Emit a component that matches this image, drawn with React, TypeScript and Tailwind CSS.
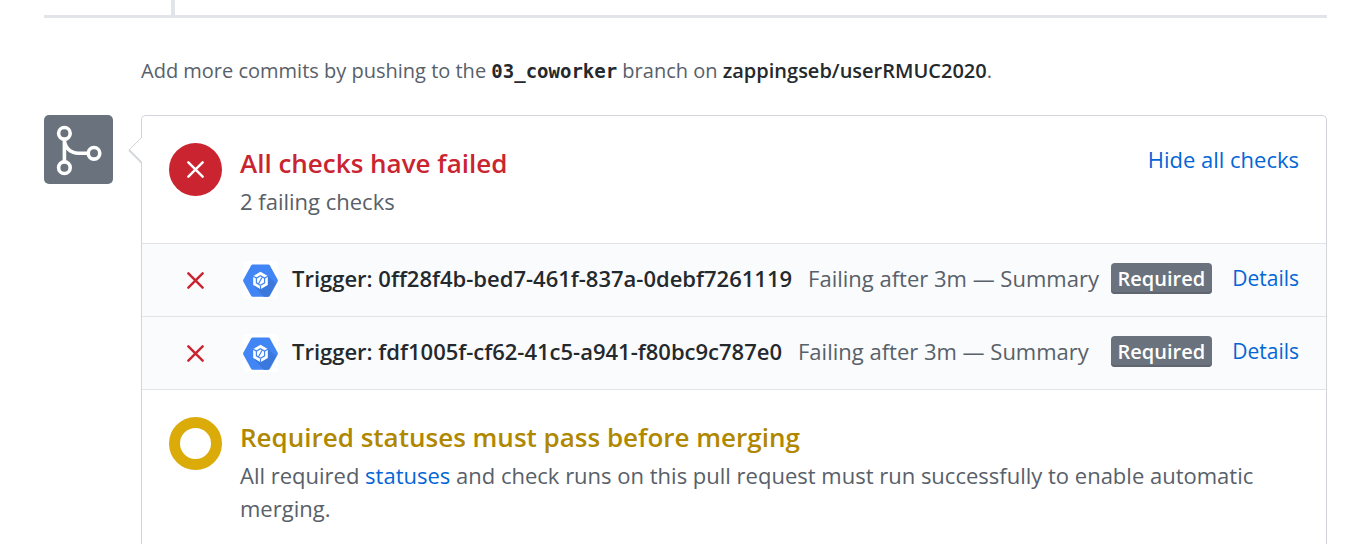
import React from "react";

const checks = [
  { id: "0ff28f4b-bed7-461f-837a-0debf7261119", status: "Failing after 3m — Summary" },
  { id: "fdf1005f-cf62-41c5-a941-f80bc9c787e0", status: "Failing after 3m — Summary" },
];

function MergeIcon() {
  return (
    <svg viewBox="0 0 69 69" className="h-[69px] w-[69px]" fill="none" stroke="#fff" strokeWidth="3.6" aria-hidden="true">
      <circle cx="20.4" cy="18.3" r="5.8" />
      <circle cx="20.4" cy="52.7" r="5.8" />
      <circle cx="50" cy="38.3" r="5.8" />
      <path d="M20.4 24v23M20.4 24c0 8.5 5.8 14.3 14.2 14.3H44" />
    </svg>
  );
}

function Cross({ className }: { className: string }) {
  return (
    <svg viewBox="0 0 16 16" className={className} fill="none" stroke="currentColor" strokeWidth="2.3" strokeLinecap="round" aria-hidden="true">
      <path d="M1.3 1.3l13.4 13.4M14.7 1.3L1.3 14.7" />
    </svg>
  );
}

function BuildLogo() {
  return (
    <svg viewBox="0 0 35 38" className="h-[38px] w-[35px] shrink-0 rounded-sm bg-white" aria-hidden="true">
      <path d="M9.6 3.5h15.8q1 0 1.5.9l7.7 14.1q.6 1.1 0 2.2l-7.7 14.1q-.5.9-1.5.9H9.600q-1 0-1.5-.9L.4 20.7q-.6-1.1 0-2.2L8.1 4.4q.5-.9 1.5-.9z" fill="#4285f4" />
      <path d="M24.8 15l8.2 7.300-6.8 12.500q-.5.9-1.500.9h-3.900L10.200 24l7.300 4.200z" fill="#3b78dc" />
      <path d="M17.5 10.8l7.300 4.200v8.900l-7.300 4.300-7.300-4.300V15z" fill="#fff" />
      <path d="M17.5 14.8l4.100 2.400v4.600l-4.100 2.400-4.100-2.400v-4.600zM10 14.900l3.400 2.300M25 14.900l-3.400 2.300M17.500 24.200v4.200M19.400 15.800l-4 7.200" fill="none" stroke="#4285f4" strokeWidth="1.2" />
    </svg>
  );
}

export default function App() {
  return (
    <main className="h-screen overflow-hidden bg-white pr-[27px] pl-[44px] font-['Open_Sans','Noto_Sans',sans-serif] text-[22px] leading-[33px] text-[#586069]">
      <div className="h-[18px] border-b-[3px] border-[#e1e4e8] pl-[127px]">
        <div className="h-full w-1 bg-[#e1e4e8]" />
      </div>

      <p className="mt-9 pl-[97px] text-[20px]">
        Add more commits by pushing to the{" "}
        <code className="font-['DejaVu_Sans_Mono',monospace] text-[19px] leading-none font-bold text-[#24292e]">03_coworker</code>{" "}
        branch on <strong className="font-semibold text-[#24292e]">zappingseb/userRMUC2020</strong>.
      </p>

      <div className="mt-7 flex items-start gap-7">
        <div className="shrink-0 rounded-[5px] bg-[#6a737d]">
          <MergeIcon />
        </div>

        <section className="relative min-w-0 flex-1 rounded-t-[5px] border border-b-0 border-[#d1d5da]">
          <svg viewBox="0 0 14 28" className="absolute top-5 -left-3.5 h-7 w-3.5" fill="none" aria-hidden="true">
            <path d="M14 1v26L1 14z" fill="#fff" />
            <path d="M14 1L1 14" stroke="#d1d5da" />
            <path d="M1 14l13 13" stroke="#d1d5da" strokeWidth="1.8" />
          </svg>

          <header className="flex items-start gap-[18px] px-[27px] pt-[27px] pb-[25px]">
            <div className="flex h-[53px] w-[53px] shrink-0 items-center justify-center rounded-full bg-[#cb2431] text-white">
              <Cross className="h-[17px] w-[17px]" />
            </div>
            <div className="min-w-0 flex-1 pt-0.5">
              <h2 className="text-[26px] leading-9 font-semibold text-[#cb2431]">All checks have failed</h2>
              <p className="pt-1">2 failing checks</p>
            </div>
            <button type="button" className="shrink-0 text-[#0366d6]">Hide all checks</button>
          </header>

          <ul>
            {checks.map((check) => (
              <li key={check.id} className="flex h-[73px] items-center border-t border-[#e1e4e8] bg-[#fafbfc] px-[27px] whitespace-nowrap">
                <div className="flex w-[53px] shrink-0 justify-center text-[#cb2431]">
                  <Cross className="h-[17px] w-[17px]" />
                </div>
                <div className="ml-[21px]">
                  <BuildLogo />
                </div>
                <div className="ml-3.5 flex min-w-0 flex-1 items-center pb-1">
                  <strong className="font-semibold text-[#24292e]">Trigger: {check.id}</strong>
                  <span className="ml-4">{check.status}</span>
                  <span className="ml-auto rounded-[4px] bg-[#6a737d] px-[7px] text-[20px] leading-[31px] font-semibold text-white shadow-[inset_0_-2px_0_#5f6670]">
                    Required
                  </span>
                  <a href="#details" className="ml-5 text-[21px] text-[#0366d6]">Details</a>
                </div>
              </li>
            ))}
          </ul>

          <div className="flex items-start gap-[18px] border-t border-[#e1e4e8] px-[27px] pt-[27px] pb-12">
            <div className="h-[53px] w-[53px] shrink-0 rounded-full border-[11px] border-[#dbab09]" />
            <div className="min-w-0 flex-1 pt-0.5">
              <h2 className="text-[26px] leading-9 font-semibold text-[#b08800]">Required statuses must pass before merging</h2>
              <p className="pt-1">
                All required <a href="#statuses" className="text-[#0366d6]">statuses</a> and check runs on this pull request must run successfully to enable automatic merging.
              </p>
            </div>
          </div>
        </section>
      </div>
    </main>
  );
}
